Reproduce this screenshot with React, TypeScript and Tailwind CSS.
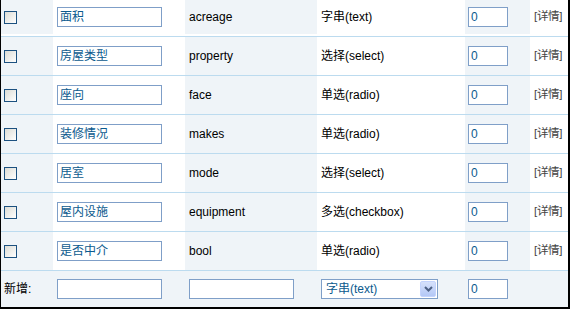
import React from "react";

const ROWS = [
  { name: "面积", field: "acreage", type: "字串(text)" },
  { name: "房屋类型", field: "property", type: "选择(select)" },
  { name: "座向", field: "face", type: "单选(radio)" },
  { name: "装修情况", field: "makes", type: "单选(radio)" },
  { name: "居室", field: "mode", type: "选择(select)" },
  { name: "屋内设施", field: "equipment", type: "多选(checkbox)" },
  { name: "是否中介", field: "bool", type: "单选(radio)" },
];

const font = "font-['Liberation_Sans','Noto_Sans_CJK_SC',sans-serif]";

function Checkbox() {
  return (
    <div className="w-[13px] h-[13px] border border-[#1c5180] bg-gradient-to-br from-[#dcdcd5] to-white" />
  );
}

function Field({ value, w }: { value: string; w: string }) {
  return (
    <div
      className={`${w} h-[20px] border border-[#7f9fc8] bg-white flex items-center pl-[2px] text-[12px] text-[#0b5a8e] leading-none`}
    >
      {value}
    </div>
  );
}

export default function App() {
  return (
    <div
      className={`${font} w-[570px] h-[309px] overflow-hidden bg-white border-l border-r-2 border-b-2 border-black text-[12px] text-black`}
    >
      {ROWS.map((r, i) => (
        <div
          key={r.field}
          className={`flex ${i === 0 ? "h-[36px] pb-[2px]" : "h-[39px] border-t border-[#bcdbef]"}`}
        >
          <div className="w-[52px] bg-[#eff4f8] flex items-center pl-[3px]">
            <Checkbox />
          </div>
          <div className="w-[132px] bg-white flex items-center pl-[4px]">
            <Field value={r.name} w="w-[105px]" />
          </div>
          <div className="w-[132px] bg-[#eff4f8] flex items-center pl-[4px]">{r.field}</div>
          <div className="w-[148px] bg-white flex items-center pl-[4px]">{r.type}</div>
          <div className="w-[65px] bg-[#eff4f8] flex items-center pl-[3px]">
            <Field value="0" w="w-[40px]" />
          </div>
          <div className="w-[38px] bg-white flex items-center pl-[4px] text-[11.5px] text-[#444] whitespace-nowrap tracking-[-0.3px]">
            [详情]
          </div>
        </div>
      ))}
      <div className="flex h-[37px] border-t border-[#bcdbef] bg-[#eff4f8]">
        <div className="w-[52px] flex items-center pl-[3px]">新增:</div>
        <div className="w-[132px] flex items-center pl-[4px]">
          <Field value="" w="w-[105px]" />
        </div>
        <div className="w-[132px] flex items-center pl-[4px]">
          <Field value="" w="w-[105px]" />
        </div>
        <div className="w-[148px] flex items-center pl-[4px]">
          <div className="w-[117px] h-[20px] border border-[#7f9fc8] bg-white flex items-center justify-between pl-[4px] pr-[1px] text-[#0b5a8e]">
            <span>字串(text)</span>
            <div className="w-[16px] h-[16px] rounded-[2px] bg-gradient-to-b from-[#d6e1fb] to-[#b4c8f6] border border-[#c3d3fd] flex items-center justify-center">
              <svg width="9" height="6" viewBox="0 0 9 6">
                <path d="M1 1 L4.5 4.5 L8 1" stroke="#4d6185" strokeWidth="2" fill="none" />
              </svg>
            </div>
          </div>
        </div>
        <div className="w-[65px] flex items-center pl-[3px]">
          <Field value="0" w="w-[40px]" />
        </div>
        <div className="w-[38px]" />
      </div>
    </div>
  );
}
